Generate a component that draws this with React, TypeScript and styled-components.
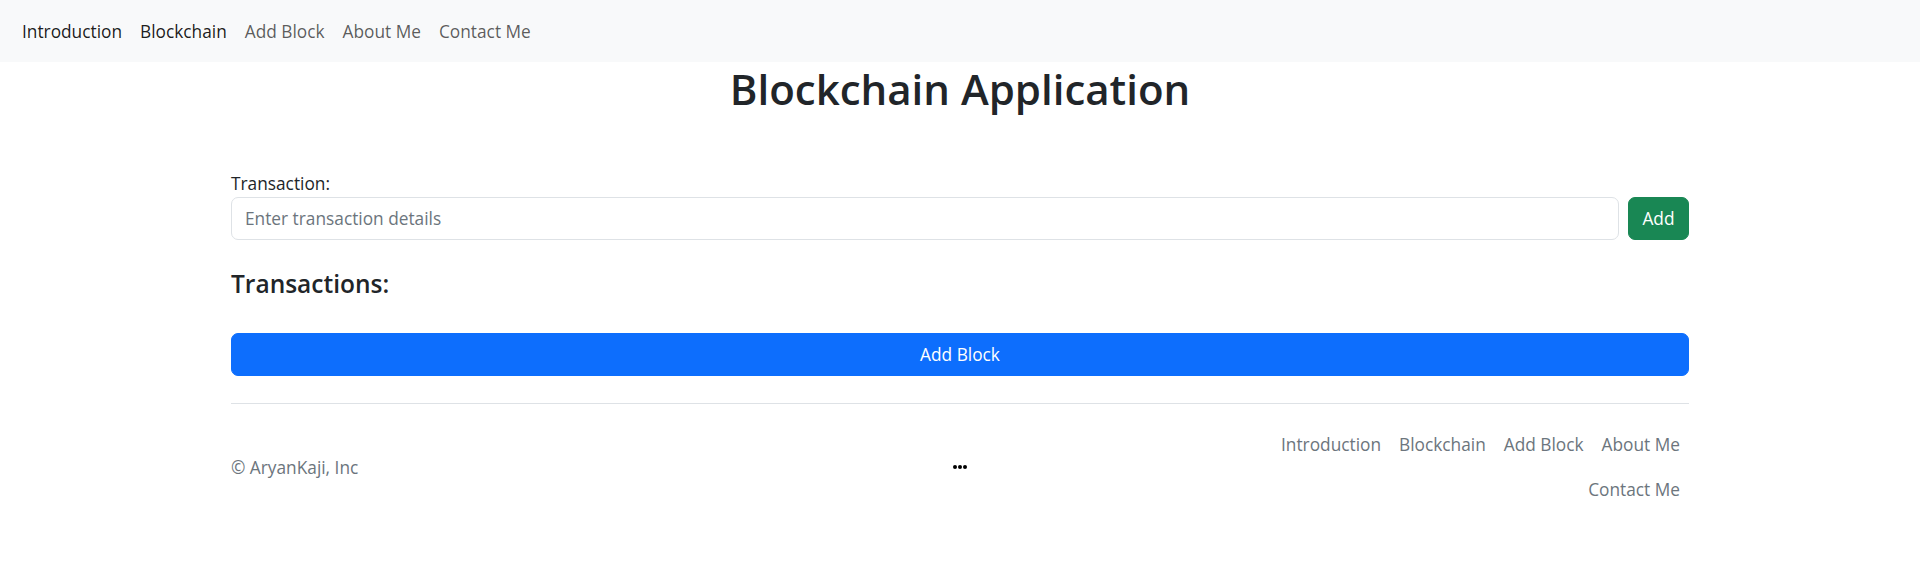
import React from "react";
import styled, { createGlobalStyle } from "styled-components";

const FONT = `"Segoe UI", "Open Sans", "Noto Sans", "Liberation Sans", sans-serif`;
const BASE = "17.3px";

const Global = createGlobalStyle`
  html, body { margin: 0; padding: 0; background: #fff; }
  body {
    font-family: ${FONT};
    font-size: ${BASE};
    line-height: 1.5;
    color: #212529;
  }
  * { box-sizing: border-box; }
`;

const Navbar = styled.nav`
  background: #f8f9fa;
  padding: 8.5px 13px;
  display: flex;
  align-items: center;
`;

const NavList = styled.ul`
  list-style: none;
  margin: 0;
  padding: 0;
  display: flex;
  flex-wrap: wrap;
  justify-content: ${(p: { $end?: boolean }) => (p.$end ? "flex-end" : "flex-start")};
`;

const NavLink = styled.a<{ $tone: "strong" | "muted" | "secondary" }>`
  display: block;
  padding: 9px 9px;
  font-size: ${BASE};
  line-height: 27px;
  text-decoration: none;
  cursor: pointer;
  color: ${(p) =>
    p.$tone === "strong"
      ? "rgba(0,0,0,0.9)"
      : p.$tone === "muted"
      ? "rgba(0,0,0,0.65)"
      : "#6c757d"};
`;

const Container = styled.main`
  width: 1458px;
  margin: 0 auto;
`;

const Title = styled.h1`
  margin: 0 0 9px;
  font-size: 42px;
  font-weight: 600;
  line-height: 54px;
  text-align: center;
  color: #212529;
`;

const Form = styled.form`
  margin-top: 54px;
`;

const Label = styled.label`
  display: block;
  font-size: ${BASE};
  line-height: 27px;
`;

const InputRow = styled.div`
  display: flex;
  gap: 9px;
  align-items: stretch;
`;

const Input = styled.input`
  flex: 1;
  height: 43px;
  padding: 6px 13px;
  font-family: ${FONT};
  font-size: ${BASE};
  line-height: 27px;
  color: #212529;
  border: 1px solid #dee2e6;
  border-radius: 7px;
  outline: none;
  &::placeholder { color: #6c757d; }
`;

const Button = styled.button<{ $variant: "success" | "primary"; $block?: boolean }>`
  font-family: ${FONT};
  font-size: ${BASE};
  line-height: 27px;
  padding: 7px 13.5px;
  height: 43px;
  border-radius: 7px;
  border: 1px solid ${(p) => (p.$variant === "success" ? "#198754" : "#0d6efd")};
  background: ${(p) => (p.$variant === "success" ? "#198754" : "#0d6efd")};
  color: #fff;
  cursor: pointer;
  width: ${(p) => (p.$block ? "100%" : "auto")};
  display: block;
`;

const SubTitle = styled.h4`
  margin: 28px 0 33px;
  font-size: 24.5px;
  font-weight: 600;
  line-height: 32.4px;
  color: #212529;
`;

const Footer = styled.footer`
  margin: 27px 0;
  padding: 18px 0;
  border-top: 1px solid #dee2e6;
  display: flex;
  align-items: center;
  justify-content: space-between;
`;

const FooterCol = styled.div<{ $align: "start" | "center" | "end" }>`
  flex: 0 0 33.3333%;
  display: flex;
  align-items: center;
  justify-content: ${(p) =>
    p.$align === "start" ? "flex-start" : p.$align === "center" ? "center" : "flex-end"};
`;

const Copy = styled.p`
  margin: 0;
  color: #6c757d;
  font-size: ${BASE};
  line-height: 27px;
`;

const Dots = () => (
  <svg width="14" height="6" viewBox="0 0 14 6" aria-hidden="true">
    <circle cx="2" cy="3" r="2" fill="#000" />
    <circle cx="7" cy="3" r="2" fill="#000" />
    <circle cx="12" cy="3" r="2" fill="#000" />
  </svg>
);

const navItems = ["Introduction", "Blockchain", "Add Block", "About Me", "Contact Me"];

export default function App() {
  return (
    <>
      <Global />
      <Navbar>
        <NavList>
          {navItems.map((t, i) => (
            <li key={t}>
              <NavLink $tone={i < 2 ? "strong" : "muted"}>{t}</NavLink>
            </li>
          ))}
        </NavList>
      </Navbar>
      <Container>
        <Title>Blockchain Application</Title>
        <Form onSubmit={(e) => e.preventDefault()}>
          <Label htmlFor="tx">Transaction:</Label>
          <InputRow>
            <Input id="tx" type="text" placeholder="Enter transaction details" />
            <Button type="submit" $variant="success">Add</Button>
          </InputRow>
        </Form>
        <SubTitle>Transactions:</SubTitle>
        <Button type="button" $variant="primary" $block>
          Add Block
        </Button>
        <Footer>
          <FooterCol $align="start">
            <Copy>© AryanKaji, Inc</Copy>
          </FooterCol>
          <FooterCol $align="center">
            <Dots />
          </FooterCol>
          <FooterCol $align="end">
            <NavList $end>
              {navItems.map((t) => (
                <li key={t}>
                  <NavLink $tone="secondary">{t}</NavLink>
                </li>
              ))}
            </NavList>
          </FooterCol>
        </Footer>
      </Container>
    </>
  );
}
